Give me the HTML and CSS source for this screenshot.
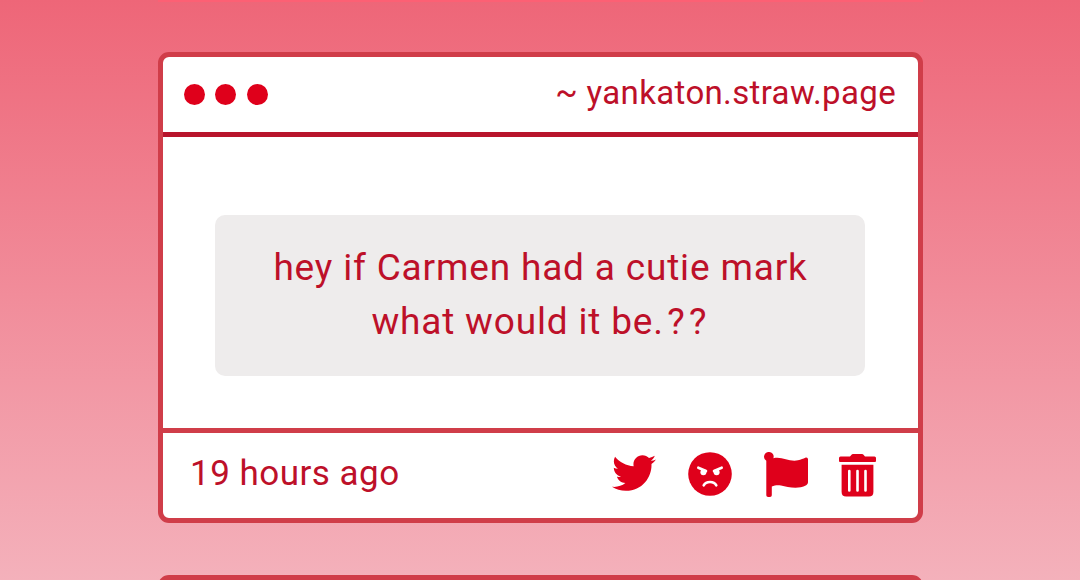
FILE: index.html
```html
<!DOCTYPE html>
<html lang="en">
<head>
<meta charset="utf-8">
<title>Inbox</title>
<link rel="stylesheet" href="styles.css">
</head>
<body>
<main class="feed">
  <div class="previous"></div>
  <article class="card">
    <header class="card-header">
      <div class="dots"><span class="dot"></span><span class="dot"></span><span class="dot"></span></div>
      <div class="site">~ yankaton.straw.page</div>
    </header>
    <section class="card-body">
      <p class="message"><span class="line">hey if Carmen had a cutie mark</span><span class="line">what would it be<span class="marks">.??</span></span></p>
    </section>
    <footer class="card-footer">
      <time class="time">19 hours ago</time>
      <div class="actions">
        <svg class="icon twitter" viewBox="0 48 512 416"><path d="M459.37 151.716c.325 4.548.325 9.097.325 13.645 0 138.72-105.583 298.558-298.558 298.558-59.452 0-114.68-17.219-161.137-47.106 8.447.974 16.568 1.299 25.34 1.299 49.055 0 94.213-16.568 130.274-44.832-46.132-.975-84.792-31.188-98.112-72.772 6.498.974 12.995 1.624 19.818 1.624 9.421 0 18.843-1.3 27.614-3.573-48.081-9.747-84.143-51.98-84.143-102.985v-1.299c13.969 7.797 30.214 12.67 47.431 13.319-28.264-18.843-46.781-51.005-46.781-87.391 0-19.492 5.197-37.36 14.294-52.954 51.655 63.675 129.3 105.258 216.365 109.807-1.624-7.797-2.599-15.918-2.599-24.04 0-57.828 46.782-104.934 104.934-104.934 30.213 0 57.502 12.67 76.67 33.137 23.715-4.548 46.456-13.32 66.599-25.34-7.798 24.366-24.366 44.833-46.132 57.827 21.117-2.273 41.584-8.122 60.426-16.243-14.292 20.791-32.161 39.308-52.628 54.253z"/></svg>
        <svg class="icon angry" viewBox="0 0 44 44"><circle cx="22" cy="22" r="21.8"/><g class="ink"><path d="M10.3 15.7 L18 19 M33.7 15.7 L26 19"/><path d="M15.7 33.4 C18 28.8 26 28.8 28.3 33.4"/></g><g class="eyes"><circle cx="15.4" cy="20.2" r="3"/><circle cx="28.6" cy="20.2" r="3"/></g></svg>
        <svg class="icon flag" viewBox="0 0 44 45"><path d="M4.700 0a4.700 4.700 0 0 1 4.700 6.200C18 4 25 10.200 34 8.300c3-.600 5.300-1.600 7.300-2.500 1.500-.700 2.700.1 2.700 1.700V30c0 1.400-.5 2.300-1.800 3.200-9 4.600-18.200 1.600-25.200.2-3-.5-6-.4-9.200 1V43c0 1.200-.7 2-1.800 2H4.200C3 45 2.300 44.200 2.300 43V8.700A4.700 4.700 0 0 1 4.700 0z"/></svg>
        <svg class="icon trash" viewBox="0 0 37 43"><path d="M1.500 2.500H11L12.500.7Q13 0 14 0h9q1 0 1.500.7L26 2.500h9.500Q37 2.500 37 4v3q0 1-1 1H1q-1 0-1-1V4q0-1.500 1.500-1.500z"/><path d="M2.600 10.700h31.800V38q0 4.500-4.500 4.500H7.100Q2.600 42.500 2.600 38z"/><path class="slots" d="M10.300 17v19.500M18.500 17v19.500M26.500 17v19.500"/></svg>
      </div>
    </footer>
  </article>
  <article class="card next"></article>
</main>
</body>
</html>
```
FILE: styles.css
```css
* { box-sizing: border-box; }
body {
  margin: 0;
  height: 580px;
  overflow: hidden;
  background: linear-gradient(#ee6678 0, #f4b1bb 100%);
  font-family: Roboto, "Liberation Sans", sans-serif;
  color: #bd1029;
}
.feed {
  width: 765px;
  margin-left: 158px;
  height: 580px;
  overflow: hidden;
}
.previous { height: 2px; margin-bottom: 50px; background: #fc6074; }
.card {
  height: 471px;
  display: flex;
  flex-direction: column;
  border: 5px solid #d03d49;
  border-radius: 11px;
  background: #fff;
}
.next { margin-top: 52px; }
.card-header {
  height: 80px;
  padding: 0 22px 0 21px;
  display: flex;
  align-items: center;
  justify-content: space-between;
  border-bottom: 5px solid #b8142c;
}
.dots { display: flex; gap: 10.4px; }
.dot { width: 21px; height: 21px; border-radius: 50%; background: #df001b; }
.site { font-size: 33px; line-height: 40px; letter-spacing: 0.35px; padding-bottom: 4px; }
.card-body { flex: 1; padding: 78px 53px 0 52px; }
.message {
  margin: 0;
  height: 161px;
  padding-top: 26px;
  border-radius: 10px;
  background: #eeecec;
  text-align: center;
  font-size: 37px;
  line-height: 54px;
  letter-spacing: 0.83px;
}
.line { display: block; white-space: nowrap; padding-left: 1px; }
.marks { letter-spacing: 4.2px; margin-right: -1px; }
.card-footer {
  height: 90px;
  padding: 0 42px 0 27px;
  display: flex;
  align-items: center;
  justify-content: space-between;
  border-top: 5px solid #d03d49;
}
.time { font-size: 35px; line-height: 42px; letter-spacing: 0.48px; padding-bottom: 4px; }
.actions { display: flex; align-items: center; }
.icon { display: block; fill: #df001b; }
.twitter { width: 44px; height: 36px; margin-right: 32px; margin-bottom: 5px; }
.angry { width: 44px; height: 44px; margin-right: 32px; margin-bottom: 3px; }
.flag { width: 44px; height: 45px; margin-right: 31px; margin-bottom: 2px; }
.trash { width: 37px; height: 43px; margin-bottom: 1px; }
.ink { fill: none; stroke: #fff; stroke-width: 2.6; stroke-linecap: round; }
.eyes { fill: #fff; }
.slots { fill: none; stroke: #fff; stroke-width: 2.6; stroke-linecap: round; }
```
